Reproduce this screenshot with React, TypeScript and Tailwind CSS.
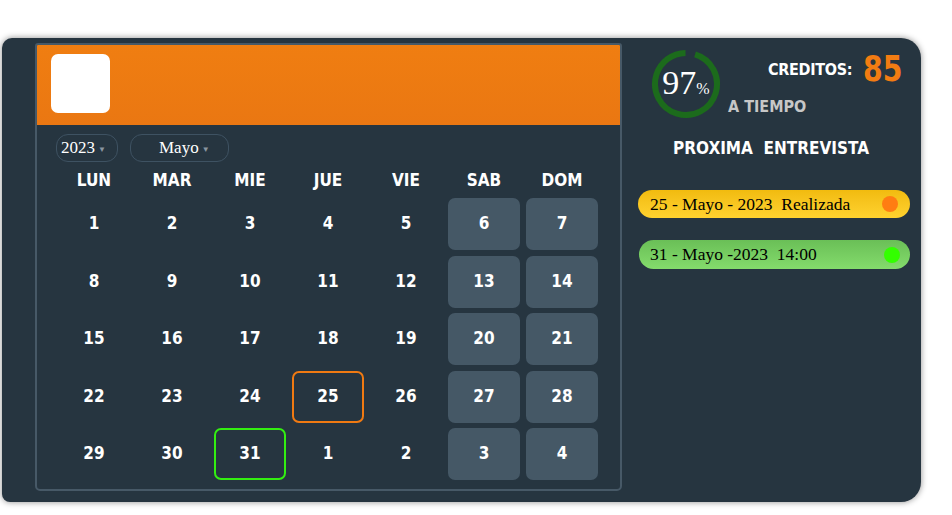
import React from "react";

const cond = { fontFamily: '"DejaVu Sans Condensed", "DejaVu Sans", sans-serif', fontStretch: "condensed" as const };
const serif = { fontFamily: '"Liberation Serif", "Times New Roman", serif' };

type Cell = { d: number; weekend?: boolean; ring?: "orange" | "green" };

const rows: Cell[][] = [
  [{ d: 1 }, { d: 2 }, { d: 3 }, { d: 4 }, { d: 5 }, { d: 6, weekend: true }, { d: 7, weekend: true }],
  [{ d: 8 }, { d: 9 }, { d: 10 }, { d: 11 }, { d: 12 }, { d: 13, weekend: true }, { d: 14, weekend: true }],
  [{ d: 15 }, { d: 16 }, { d: 17 }, { d: 18 }, { d: 19 }, { d: 20, weekend: true }, { d: 21, weekend: true }],
  [{ d: 22 }, { d: 23 }, { d: 24 }, { d: 25, ring: "orange" }, { d: 26 }, { d: 27, weekend: true }, { d: 28, weekend: true }],
  [{ d: 29 }, { d: 30 }, { d: 31, ring: "green" }, { d: 1 }, { d: 2 }, { d: 3, weekend: true }, { d: 4, weekend: true }],
];

const days = ["LUN", "MAR", "MIE", "JUE", "VIE", "SAB", "DOM"];

function Caret() {
  return <span className="text-[#8a96a0] text-[8px] leading-none ml-[3px] mt-[3px]">▼</span>;
}

function Ring() {
  const r = 31;
  const c = 2 * Math.PI * r;
  return (
    <svg width="70" height="70" viewBox="0 0 70 70" className="block">
      <circle
        cx="35"
        cy="35"
        r={r}
        fill="none"
        stroke="#1c6b1c"
        strokeWidth="6"
        strokeDasharray={`${c - 10} ${c}`}
        transform="rotate(-73 35 35)"
      />
    </svg>
  );
}

export default function App() {
  return (
    <div className="w-[952px] h-[515px] bg-white overflow-hidden">
      <div className="ml-[2px] mt-[38px] w-[919px] h-[464px] bg-[#263540] rounded-tl-[10px] rounded-bl-[8px] rounded-tr-[20px] rounded-br-[20px] shadow-[0_0_6px_rgba(0,0,0,0.45)] flex">
        {/* Calendar card */}
        <div className="ml-[33px] mt-[5px] w-[587px] h-[448px] border-[2px] border-[#475967] rounded-b-[5px] rounded-t-[3px] flex flex-col overflow-hidden">
          <div className="h-[82px] shrink-0 -mx-[2px] -mt-[2px] bg-gradient-to-b from-[#f07e11] to-[#ea7712] flex items-start rounded-t-[3px]">
            <div className="ml-[16px] mt-[11px] w-[59px] h-[59px] bg-white rounded-[7px]" />
          </div>
          <div className="flex pl-[19px] mt-[9px] gap-[12px]" style={serif}>
            <div className="w-[62px] h-[28px] border-[1.5px] border-[#3e5262] rounded-[12px] flex items-center pl-[4px] text-white text-[17px]">
              2023
              <Caret />
            </div>
            <div className="w-[99px] h-[28px] border-[1.5px] border-[#3e5262] rounded-[12px] flex items-center pl-[28px] text-white text-[17px]">
              Mayo
              <Caret />
            </div>
          </div>
          <div className="grid grid-cols-[repeat(7,72px)] gap-x-[6px] pl-[21px] mt-[8px] h-[20px]" style={cond}>
            {days.map((d) => (
              <div key={d} className="text-center text-white font-bold text-[17px] leading-[20px]">
                {d}
              </div>
            ))}
          </div>
          <div className="grid grid-cols-[repeat(7,72px)] auto-rows-[52px] gap-x-[6px] gap-y-[5.5px] pl-[21px] mt-[8px]" style={cond}>
            {rows.flat().map((c, i) => {
              let cls = "flex items-center justify-center text-white font-bold text-[17px] rounded-[7px]";
              if (c.weekend) cls += " bg-[#455866]";
              if (c.ring === "orange") cls += " border-[2px] border-[#f07a12]";
              if (c.ring === "green") cls += " border-[2px] border-[#33ee11]";
              return (
                <div key={i} className={cls}>
                  {c.d}
                </div>
              );
            })}
          </div>
        </div>

        {/* Right panel */}
        <div className="flex-1 flex flex-col">
          <div className="flex mt-[11px] ml-[29px]">
            <div className="relative w-[70px] h-[70px]">
              <Ring />
              <div className="absolute inset-0 flex items-center justify-center text-white" style={serif}>
                <span className="text-[34px] leading-none -mt-[2px]">97</span>
                <span className="text-[16px] leading-none mt-[10px]">%</span>
              </div>
            </div>
            <div className="flex-1 flex flex-col">
              <div className="flex items-center justify-end pr-[14px] mt-[2px]" style={cond}>
                <span className="text-white font-bold text-[16px] tracking-[-0.3px] mt-[2px]">CREDITOS:</span>
                <span className="ml-[11px] text-[#f27c12] font-bold text-[35px] leading-[36px] scale-x-90 origin-left">85</span>
              </div>
              <div className="ml-[7px] mt-[10px] text-[#c7c7c7] font-bold text-[16px] leading-[20px]" style={cond}>
                A TIEMPO
              </div>
            </div>
          </div>
          <div className="ml-[51px] mt-[19px] text-white font-bold text-[17px] leading-[20px] whitespace-pre" style={cond}>
            PROXIMA  ENTREVISTA
          </div>
          <div className="ml-[16px] mt-[32px] w-[272px] h-[28px] rounded-full bg-gradient-to-b from-[#f1bb0e] to-[#ffd22e] flex items-center pl-[12px] pr-[12px] text-black text-[17.5px] whitespace-pre" style={serif}>
            <span className="flex-1">25 - Mayo - 2023  Realizada</span>
            <span className="w-[16px] h-[16px] rounded-full bg-[#ff7d12]" />
          </div>
          <div className="ml-[17px] mt-[22px] w-[271px] h-[29px] rounded-full bg-gradient-to-b from-[#6abf57] to-[#84dc6c] flex items-center pl-[11px] pr-[10px] text-black text-[17.5px] whitespace-pre" style={serif}>
            <span className="flex-1">31 - Mayo -2023  14:00</span>
            <span className="w-[16px] h-[16px] rounded-full bg-[#33ff00]" />
          </div>
        </div>
      </div>
    </div>
  );
}
